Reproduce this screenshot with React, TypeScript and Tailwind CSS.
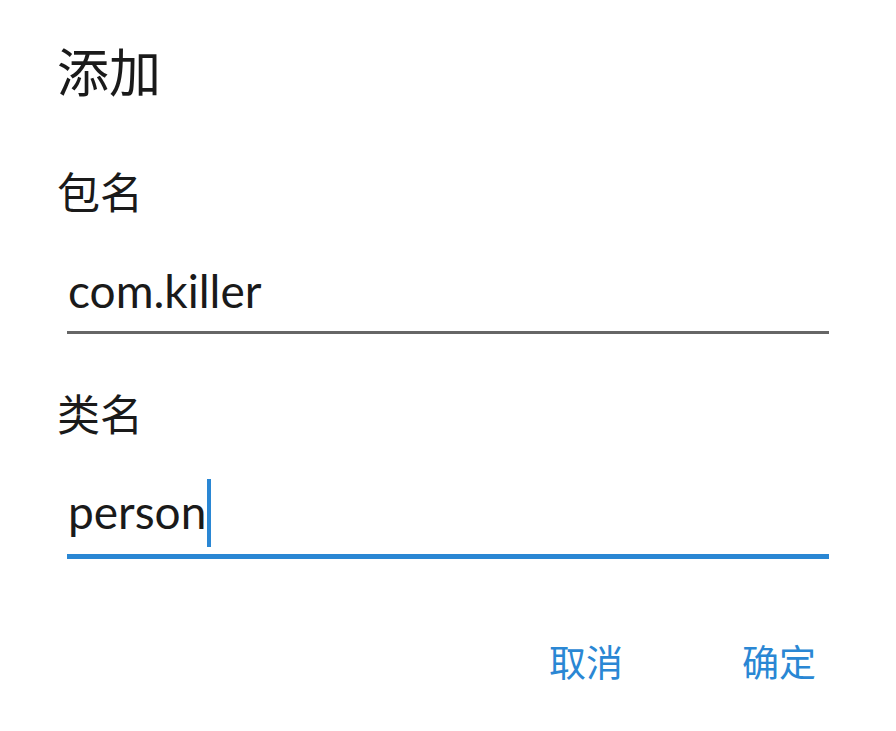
import React from "react";

const cjk = { fontFamily: '"Noto Sans CJK SC", "Noto Sans", sans-serif' };
const latin = { fontFamily: 'Lato, "Noto Sans CJK SC", sans-serif' };

export default function App() {
  return (
    <div className="w-[896px] h-[731px] bg-white text-[#1a1a1a] flex flex-col pl-[57px] pr-[67px]" style={cjk}>
      <div className="mt-[41px] text-[52px] leading-[58px]">添加</div>
      <div className="mt-[67px] text-[43px] leading-[48px]">包名</div>
      <div className="ml-[10px] mt-[49px] flex flex-col">
        <div className="pl-px h-[68px] flex items-end" style={latin}>
          <span className="text-[46px] leading-[52px] mb-[14px]">com.killer</span>
        </div>
        <div className="h-[3px] bg-[#666666]"></div>
      </div>
      <div className="mt-[54px] text-[43px] leading-[48px]">类名</div>
      <div className="ml-[10px] mt-[38px] flex flex-col">
        <div className="pl-px h-[80px] flex items-end" style={latin}>
          <span className="text-[46px] leading-[52px] mb-[16px]">person</span>
          <span className="w-[4px] h-[68px] bg-[#2a87d4] ml-[1px] mb-[7px]"></span>
        </div>
        <div className="h-[5px] bg-[#2a87d4]"></div>
      </div>
      <div className="mt-[80px] flex justify-end gap-[119px] text-[37px] leading-[44px] text-[#2a87d4] pr-[13px]">
        <span>取消</span>
        <span>确定</span>
      </div>
    </div>
  );
}
